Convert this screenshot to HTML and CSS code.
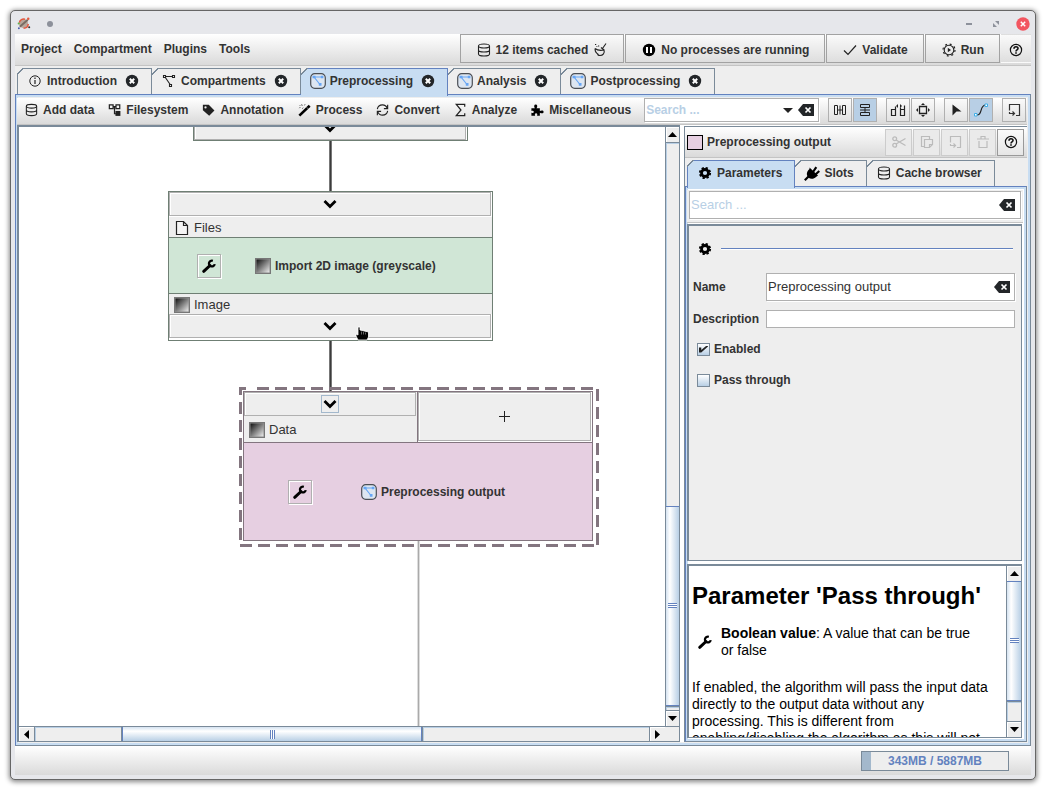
FILE: index.html
```html
<!DOCTYPE html>
<html lang="en">
<head>
<meta charset="utf-8">
<title>Preprocessing</title>
<link rel="stylesheet" href="styles.css">
</head>
<body>
<svg class="defs" aria-hidden="true">
  <defs>
    <linearGradient id="grey" x1="0" y1="0" x2="1" y2="1"><stop offset="0" stop-color="#111"/><stop offset="1" stop-color="#eee"/></linearGradient>
  </defs>
  <symbol id="db" viewBox="0 0 16 16"><g fill="none" stroke="#222" stroke-width="1.1"><ellipse cx="8" cy="4" rx="5.500" ry="2"/><path d="M2.500 4v8c0 1.200 2.500 2 5.500 2s5.500-.8 5.500-2V4M2.500 8c0 1.200 2.500 2 5.500 2s5.500-.8 5.500-2"/></g></symbol>
  <symbol id="close" viewBox="0 0 16 16"><circle cx="8" cy="8" r="6.2" fill="#232629"/><path d="M5.800 5.800l4.400 4.400M10.200 5.800l-4.400 4.400" stroke="#fff" stroke-width="2"/></symbol>
  <symbol id="info" viewBox="0 0 16 16"><circle cx="8" cy="8" r="5.200" fill="none" stroke="#222"/><path d="M8 7v4M8 4.600v1.400" stroke="#222" stroke-width="1.200"/></symbol>
  <symbol id="graph" viewBox="0 0 16 16"><g fill="#fff" stroke="#222" stroke-width="1.100"><path d="M4 3.500h8M4 4l5.500 8"/><path d="M2.500 2.500h2v2h-2zM11.500 2.500h2v2h-2zM8.500 11.500h2v2h-2z"/></g></symbol>
  <symbol id="comp" viewBox="0 0 16 16"><rect x=".7" y=".7" width="14.600" height="14.600" rx="4" fill="#dde6f1" stroke="#4b4f55" stroke-width="1.200"/><path d="M4 4h8M4 4l6 7.500" stroke="#67a6f5" fill="none" stroke-width="1.200"/><path d="M2.500 2.700h3v2.600h-3zM10.800 2.700h2.600v2.600h-2.600zM8.800 10h2.700v2.800H8.800z" fill="#67a6f5"/></symbol>
  <symbol id="tree" viewBox="0 0 16 16"><g fill="none" stroke="#222" stroke-width="1.300"><path d="M2.500 2.500h4v4h-4zM9.600 2.500h4v4h-4zM6.500 4.500h3M8 4.500v7.500h2"/></g><path d="M9 9h5.300v5.300H9z" fill="#222"/></symbol>
  <symbol id="tag" viewBox="0 0 16 16"><path d="M2 2.500h6.300l6 6-5.600 5.700-6.700-6z" fill="#222"/><circle cx="4.800" cy="5.200" r="1.200" fill="#eee"/></symbol>
  <symbol id="wand" viewBox="0 0 16 16"><path d="M2.500 14L13.500 3.500" stroke="#000" stroke-width="2.800"/><path d="M10.500 5.300l1.300 1.300" stroke="#eee" stroke-width=".8"/><path d="M2.500 6l1-1M5 2l.5 1.500M8.500 2L8 3M3 3l.7.7M6.500 5.500l-.7 1" stroke="#333"/></symbol>
  <symbol id="sync" viewBox="0 0 16 16"><g fill="none" stroke="#222" stroke-width="1.200"><path d="M2.500 7C3 4 5 2.500 8 2.500c2.400 0 4.200 1.400 5 3.500M13.500 2.500V6.500H9.500M13.500 9C13 12 11 13.500 8 13.500c-2.400 0-4.200-1.400-5-3.500M2.500 13.500V9.500h4"/></g></symbol>
  <symbol id="sigma" viewBox="0 0 16 16"><path d="M12.500 4.500v-2.500h-9L8.500 8l-5 6h9v-2.500" fill="none" stroke="#222" stroke-width="1.300"/></symbol>
  <symbol id="puzzle" viewBox="0 0 16 16"><path d="M1.500 6h3.700c-1.300-1.700-.9-4 .9-4s2.200 2.300.9 4H10.500v3c1.700-.9 4-.9 4 1s-2.300 1.500-4 .8V14H7.500c.6-1.500.3-2.500-1-2.500s-1.600 1-1 2.500h-4v-3c1.500.3 2.500 0 2.500-1s-1-1.300-2.500-1z" fill="#000"/></symbol>
  <symbol id="broom" viewBox="0 0 16 16"><g fill="none" stroke="#222" stroke-width="1.100"><path d="M14 1.500L10.500 6.500M3 6.500c2.500 2 6.500 2 9 1.500 1 3-1 5.500-4 5.500-2 0-2.500-1-2.500-2M3 6.500c0 3 1.500 5 3.500 6M9 5.500l3 2.500M3 2.500h1.200M6 4h1.200M4.500 4.500h.8"/></g></symbol>
  <symbol id="pause" viewBox="0 0 16 16"><circle cx="8" cy="8" r="6.200" fill="#000"/><path d="M5 5h2v6H5zM9 5h2v6H9z" fill="#fff"/></symbol>
  <symbol id="check" viewBox="0 0 16 16"><path d="M2 8.500L6 12.500 14 3.500" fill="none" stroke="#222" stroke-width="1.200"/></symbol>
  <symbol id="run" viewBox="0 0 16 16"><circle cx="8" cy="8" r="4.800" fill="none" stroke="#222" stroke-width="1.100"/><circle cx="8" cy="8" r="6" fill="none" stroke="#222" stroke-width="1.200" stroke-dasharray="2 2.712"/><path d="M6.800 5.800v4.400L10 8z" fill="#222"/></symbol>
  <symbol id="help" viewBox="0 0 16 16"><circle cx="8" cy="8" r="5.600" fill="none" stroke="#111" stroke-width="1.200"/><path d="M6 6.700c0-2.500 4-2.500 4-.2 0 1.500-2 1.400-2 3M8 10.300v1.500" fill="none" stroke="#111" stroke-width="1.600"/></symbol>
  <symbol id="clear" viewBox="0 0 16 12"><path d="M5 0h11v12H5L0 6z" fill="#232629"/><path d="M7.500 3.500l5 5M12.500 3.500l-5 5" stroke="#fff" stroke-width="1.700"/></symbol>
  <symbol id="gear" viewBox="0 0 16 16"><circle cx="8" cy="8" r="3.500" fill="none" stroke="#000" stroke-width="2.800"/><circle cx="8" cy="8" r="5.200" fill="none" stroke="#000" stroke-width="1.800" stroke-dasharray="2.300 1.784"/></symbol>
  <symbol id="plug" viewBox="0 0 16 16"><path d="M.8 15.200L4.500 11.500" stroke="#000" stroke-width="2.200"/><path d="M9 7L12.300 2.200M11.500 9.500L15.300 6" stroke="#000" stroke-width="2.200"/><path d="M5.500 2.500l8.500 8-2 1.500c-2 2-5 2.500-7.500.7C2 10 2.500 6.500 5.500 4z" fill="#000"/></symbol>
  <symbol id="wrench" viewBox="0 0 16 16"><path d="M2.700 13.300L9 7.500" stroke="#000" stroke-width="3" stroke-linecap="round"/><path d="M11.800 2.800a2.900 2.900 0 1 0 1.900 3.300" fill="none" stroke="#000" stroke-width="2.300"/></symbol>
  <symbol id="chev" viewBox="0 0 14 10"><path d="M1.500 2L7 7.500 12.500 2" fill="none" stroke="#000" stroke-width="2.800"/></symbol>
  <symbol id="image" viewBox="0 0 16 16"><rect x=".5" y=".5" width="15" height="15" fill="#8b8b8b" stroke="#777"/><rect x="1.500" y="1.500" width="13" height="13" fill="url(#grey)"/></symbol>
  <symbol id="file" viewBox="0 0 16 16"><path d="M2.500 1.500h7l4 4v9h-11zM9.500 1.500v4h4" fill="#f4f4f4" stroke="#222" stroke-width="1.200"/></symbol>
  <symbol id="export" viewBox="0 0 16 16"><path d="M10 13.500h3.500v-11h-10v6M3.500 10v1.500h5M6.500 9.500l2 2-2 2" fill="none" stroke="currentColor" stroke-width="1.200"/></symbol>
</svg>

<div class="window">
  <header class="titlebar">
    <svg class="logo" viewBox="0 0 16 16"><circle cx="7" cy="8" r="4.800" fill="#b8a79c"/><path d="M3 11.500L11.500 4" stroke="#786b62" stroke-width="2"/><path d="M2.500 7a4.600 4.600 0 0 1 6-3.500M12 8.500a5 5 0 0 1-5 4.500" fill="none" stroke="#e4573d" stroke-width="1.600"/><circle cx="12" cy="3" r="1.300" fill="#e4573d"/><circle cx="1.800" cy="8" r="1.100" fill="#5fb04c"/><circle cx="2" cy="13" r="1" fill="#4657a8"/><circle cx="13" cy="12" r="1.100" fill="#333"/></svg>
    <span class="pin"></span>
    <span class="grow"></span>
    <button class="wbtn" aria-label="Minimize"><svg viewBox="0 0 14 14"><path d="M4 7h6" stroke="#8d919b" stroke-width="2"/></svg></button>
    <button class="wbtn" aria-label="Maximize"><svg viewBox="0 0 14 14"><path d="M6 4h4v4zM4 6v4h4z" fill="#8d919b"/></svg></button>
    <button class="wbtn" aria-label="Close"><svg viewBox="0 0 14 14"><circle cx="7" cy="7" r="6.700" fill="#f25560"/><path d="M4.800 4.800l4.400 4.400M9.200 4.800L4.800 9.200" stroke="#fff" stroke-width="1.500"/></svg></button>
  </header>

  <nav class="menubar">
    <button class="menu">Project</button><button class="menu">Compartment</button><button class="menu">Plugins</button><button class="menu">Tools</button>
    <span class="grow"></span>
    <div class="actions">
      <button class="action"><svg><use href="#db"/></svg>12 items cached<svg><use href="#broom"/></svg></button>
      <button class="action"><svg><use href="#pause"/></svg>No processes are running</button>
      <button class="action"><svg><use href="#check"/></svg>Validate</button>
      <button class="action"><svg><use href="#run"/></svg>Run</button>
      <button class="action plain" aria-label="Help"><svg><use href="#help"/></svg></button>
    </div>
  </nav>

  <div class="tabs">
    <div class="tab"><button class="name"><svg><use href="#info"/></svg>Introduction</button><button class="x" aria-label="Close Introduction"><svg><use href="#close"/></svg></button></div>
    <div class="tab"><button class="name"><svg><use href="#graph"/></svg>Compartments</button><button class="x" aria-label="Close Compartments"><svg><use href="#close"/></svg></button></div>
    <div class="tab on"><button class="name"><svg><use href="#comp"/></svg>Preprocessing</button><button class="x" aria-label="Close Preprocessing"><svg><use href="#close"/></svg></button></div>
    <div class="tab"><button class="name"><svg><use href="#comp"/></svg>Analysis</button><button class="x" aria-label="Close Analysis"><svg><use href="#close"/></svg></button></div>
    <div class="tab"><button class="name"><svg><use href="#comp"/></svg>Postprocessing</button><button class="x" aria-label="Close Postprocessing"><svg><use href="#close"/></svg></button></div>
  </div>

  <main class="pane">
    <div class="toolbar">
      <div class="tools">
        <button class="tool"><svg><use href="#db"/></svg>Add data</button>
        <button class="tool"><svg><use href="#tree"/></svg>Filesystem</button>
        <button class="tool"><svg><use href="#tag"/></svg>Annotation</button>
        <button class="tool"><svg><use href="#wand"/></svg>Process</button>
        <button class="tool"><svg><use href="#sync"/></svg>Convert</button>
        <button class="tool"><svg><use href="#sigma"/></svg>Analyze</button>
        <button class="tool"><svg><use href="#puzzle"/></svg>Miscellaneous</button>
      </div>
      <div class="field find">
        <input type="text" placeholder="Search ..." aria-label="Search algorithms">
        <button class="bare" aria-label="Show list"><svg class="down" viewBox="0 0 10 5"><path d="M0 0h10L5 5z" fill="#222"/></svg></button>
        <button class="bare" aria-label="Clear search"><svg class="clear"><use href="#clear"/></svg></button>
      </div>
      <div class="group">
        <button class="sq" aria-label="Horizontal view"><svg viewBox="0 0 16 16"><path d="M2.500 3.500h3v9h-3zM10.500 3.500h3v9h-3zM5.500 8h5M8 3.500v9" fill="none" stroke="#222"/></svg></button>
        <button class="sq on" aria-label="Vertical view"><svg viewBox="0 0 16 16"><path d="M3.500 2.500h9v3h-9zM3.500 10.500h9v3h-9zM8 5.500v5M3 8h10" fill="none" stroke="#222"/></svg></button>
      </div>
      <div class="group">
        <button class="sq" aria-label="Auto layout"><svg viewBox="0 0 16 16"><path d="M1.500 7.500h4v6h-4zM5.500 7.500v-3M10.500 7.500h4v6h-4zM10.500 7.500v-2M14.500 7.500v-4" fill="none" stroke="#222" stroke-width="1.200"/><path d="M6 4l2-2v4zM12 4l-2-2v4z" fill="#222"/></svg></button>
        <button class="sq" aria-label="Center view"><svg viewBox="0 0 16 16"><path d="M4.500 4.500h7v7h-7z" fill="none" stroke="#222" stroke-width="1.300"/><path d="M6 3l2-2 2 2zM6 13l2 2 2-2zM3 6L1 8l2 2zM13 6l2 2-2 2z" fill="#222"/></svg></button>
      </div>
      <div class="group">
        <button class="sq" aria-label="Select"><svg viewBox="0 0 16 16"><path d="M4.500 2.500l9 7H8.500l-4 4z" fill="#222"/></svg></button>
        <button class="sq on" aria-label="Curved edges"><svg viewBox="0 0 16 16"><path d="M4 13c6 0 2-10 9-10" fill="none" stroke="#222" stroke-width="1.200"/><path d="M1.500 11.500h2.500V14H1.500zM12 2h2.500v2.500H12z" fill="#fff" stroke="#3daee9"/></svg></button>
      </div>
      <div class="group">
        <button class="sq" aria-label="Export"><svg><use href="#export"/></svg></button>
      </div>
    </div>

    <div class="split">
      <section class="editor">
        <div class="canvas">
          <svg class="edges" aria-hidden="true">
            <path d="M311.500 14v50M311.500 214v50" stroke="#777" stroke-width="3"/><path d="M311.500 14v50M311.500 214v50" stroke="#3c3c3c"/>
            <path d="M399.500 414v2000" stroke="#ddd" stroke-width="3"/><path d="M399.500 414v2000" stroke="#aaa"/>
          </svg>
          <div class="node first"><button class="slot" aria-label="Output slot"><svg class="chev"><use href="#chev"/></svg></button></div>
          <div class="node import">
            <button class="slot" aria-label="Input slot"><svg class="chev"><use href="#chev"/></svg></button>
            <div class="port"><svg><use href="#file"/></svg>Files</div>
            <div class="core"><button class="edit" aria-label="Edit import"><svg><use href="#wrench"/></svg></button><strong><svg><use href="#image"/></svg>Import 2D image (greyscale)</strong></div>
            <div class="port out"><svg><use href="#image"/></svg>Image</div>
            <button class="slot" aria-label="Image slot"><svg class="chev"><use href="#chev"/></svg></button>
          </div>
          <div class="node output">
            <div class="ports">
              <div class="cell">
                <button class="slot" aria-label="Data slot"><span class="focus"><svg class="chev"><use href="#chev"/></svg></span></button>
                <div class="port"><svg><use href="#image"/></svg>Data</div>
              </div>
              <button class="slot add" aria-label="Add slot"><svg viewBox="0 0 16 16"><path d="M7.500 2v11M2 7.500h11" stroke="#222" stroke-width="1"/></svg></button>
            </div>
            <div class="core"><button class="edit" aria-label="Edit output"><svg><use href="#wrench"/></svg></button><strong><svg><use href="#comp"/></svg>Preprocessing output</strong></div>
            <svg class="marquee" viewBox="0 0 361 162" aria-hidden="true"><g fill="none" stroke="#83757f" stroke-width="3"><path d="M1.500 9V2.500H7"/><path d="M18 2.500h338M358.500 3v157M1 159.500h356M1.500 16v139" stroke-dasharray="12 6"/></g></svg>
          </div>
          <svg class="pointer" viewBox="0 0 14 15" aria-hidden="true"><path d="M3 1v8L1 8v2l2 4h9l1.500-3V6L5 4V1z" fill="#000" stroke="#fff" stroke-width=".8"/><path d="M6.500 5.500v3M8.500 6v2.500M10.500 6.500v2" stroke="#888" stroke-width=".7"/></svg>
        </div>
        <div class="vbar main">
          <button aria-label="Scroll up"><svg viewBox="0 0 9 5"><path d="M0 5h9L4.500 0z"/></svg></button>
          <span class="before"></span><span class="thumb"></span><span class="after"></span>
          <button aria-label="Scroll down"><svg viewBox="0 0 9 5"><path d="M0 0h9L4.500 5z"/></svg></button>
        </div>
        <div class="hbar">
          <button aria-label="Scroll left"><svg viewBox="0 0 5 9"><path d="M5 0v9L0 4.500z"/></svg></button>
          <span class="before"></span><span class="thumb"></span><span class="after"></span>
          <button aria-label="Scroll right"><svg viewBox="0 0 5 9"><path d="M0 0v9l5-4.500z"/></svg></button>
        </div>
        <div class="corner"></div>
      </section>

      <aside class="side">
        <div class="sidehead">
          <span class="swatch"></span><h2>Preprocessing output</h2><span class="grow"></span>
          <button class="mini" disabled aria-label="Cut"><svg viewBox="0 0 16 16"><g fill="none" stroke="currentColor" stroke-width="1.300"><circle cx="3.700" cy="4.700" r="1.900"/><circle cx="3.700" cy="11.300" r="1.900"/><path d="M5 6l9.500 5.500M5 10l9.500-5.500"/></g></svg></button>
          <button class="mini" disabled aria-label="Copy"><svg viewBox="0 0 16 16"><path d="M5 12.500H2.500v-10h8V5M5.500 5.500h8v5l-3 3h-5zM13.500 10.500h-3v3" fill="none" stroke="currentColor" stroke-width="1.200"/></svg></button>
          <button class="mini" disabled aria-label="Paste"><svg><use href="#export"/></svg></button>
          <button class="mini" disabled aria-label="Delete"><svg viewBox="0 0 16 16"><path d="M2 5h12M6 5V2.500h4V5M4 7v6.500h8V7" fill="none" stroke="currentColor" stroke-width="1.200"/></svg></button>
          <button class="mini" aria-label="Help"><svg><use href="#help"/></svg></button>
        </div>
        <div class="tabs sidetabs">
          <div class="tab on"><button class="name"><svg><use href="#gear"/></svg>Parameters</button></div>
          <div class="tab"><button class="name"><svg><use href="#plug"/></svg>Slots</button></div>
          <div class="tab"><button class="name"><svg><use href="#db"/></svg>Cache browser</button></div>
        </div>
        <div class="sidepane">
          <div class="searchrow"><div class="field"><input type="text" placeholder="Search ..." aria-label="Search parameters"><button class="bare" aria-label="Clear"><svg class="clear"><use href="#clear"/></svg></button></div></div>
          <form class="params">
            <div class="section"><svg><use href="#gear"/></svg><span class="rule"></span></div>
            <div class="grid">
              <label for="name">Name</label>
              <div class="field"><input id="name" type="text" value="Preprocessing output"><button type="button" class="bare" aria-label="Clear name"><svg class="clear"><use href="#clear"/></svg></button></div>
              <label for="desc">Description</label>
              <input id="desc" class="desc" type="text">
            </div>
            <label class="tick"><input type="checkbox" checked>Enabled</label>
            <label class="tick"><input type="checkbox">Pass through</label>
          </form>
          <div class="help">
            <article>
              <h1>Parameter 'Pass through'</h1>
              <div class="kind"><svg><use href="#wrench"/></svg><p><b>Boolean value</b>: A value that can be true or false</p></div>
              <p>If enabled, the algorithm will pass the input data directly to the output data without any processing. This is different from enabling/disabling the algorithm as this will not</p>
            </article>
            <div class="vbar">
              <button aria-label="Scroll help up"><svg viewBox="0 0 9 5"><path d="M0 5h9L4.500 0z"/></svg></button>
              <span class="thumb"></span><span class="after"></span>
              <button aria-label="Scroll help down"><svg viewBox="0 0 9 5"><path d="M0 0h9L4.500 5z"/></svg></button>
            </div>
          </div>
        </div>
      </aside>
    </div>
  </main>

  <footer class="status"><div class="memory" role="progressbar" aria-valuenow="343" aria-valuemax="5887" aria-label="Memory">343MB / 5887MB</div></footer>
</div>
</body>
</html>
```
FILE: styles.css
```css
:root {
  --line: #7a8a99;
  --blue: #6382bf;
  --sel: #c8ddf2;
  --bg: #eee;
  --edge: #b0b0b0;
  --bar: linear-gradient(#fff, #dadada);
}
* { box-sizing: border-box; }
body { margin: 0; background: #fff; color: #333; font: bold 12px/16px "Liberation Sans", Arial, sans-serif; }
button, input { font: inherit; color: inherit; margin: 0; padding: 0; border: 0; background: none; border-radius: 0; outline: 0; }
svg { width: 16px; height: 16px; flex: none; display: block; }
h1, h2, p { margin: 0; }
.defs { width: 0; height: 0; position: absolute; }
.grow { flex: 1; }

.window { margin: 10px; height: calc(100vh - 20px); display: flex; flex-direction: column; padding: 0 4px 4px; background: #e6e7eb; border: 1px solid #666; border-radius: 5px; box-shadow: 0 1px 5px 1px #888; }

.titlebar { display: flex; align-items: center; height: 23px; flex: none; padding: 2px 1px 0 2px; gap: 13px; }
.logo { width: 15px; height: 15px; }
.pin { width: 6px; height: 6px; border-radius: 3px; background: #8d919b; margin-left: 2px; }
.wbtn svg { width: 14px; height: 14px; }

.menubar { display: flex; align-items: stretch; height: 32px; flex: none; padding-bottom: 2px; background: linear-gradient(#fff, #dadada); border-bottom: 1px solid #c4c4c4; }
.menu { padding: 0 6px; }
.actions { display: flex; gap: 1px; }
.action { display: flex; align-items: center; gap: 4px; padding: 2px 15px 0; border: 1px solid #a2a2a2; background: linear-gradient(#fafafa, #dedede); }
.plain { border-color: transparent; padding: 2px 6px 0; }

.tabs { display: flex; flex: none; background: var(--bg); padding: 2px 2px 0; height: 28px; }
.tab { position: relative; display: flex; align-items: center; gap: 7px; padding: 0 11px 2px 9px; border: 1px solid var(--line); border-bottom: 0; background: var(--bg); }
.tab + .tab { border-left: 0; }
.tab::before { content: ""; position: absolute; left: 0; top: -1px; width: 7px; height: 7px; background: linear-gradient(135deg, var(--bg) 0 42%, var(--line) 42% 53%, transparent 53%); }
.tab:first-child::before { left: -1px; }
.tab.on { background: var(--sel); border-color: var(--blue); margin-bottom: -2px; padding-bottom: 4px; z-index: 1; }
.name { display: flex; align-items: center; gap: 4px; }

.pane { flex: 1; min-height: 0; display: flex; flex-direction: column; border: 1px solid var(--blue); border-right-color: var(--line); border-bottom-color: var(--line); background: var(--bg); box-shadow: inset 0 0 0 2px var(--sel); padding: 3px 3px 3px 1px; }
.toolbar { display: flex; align-items: center; height: 27px; flex: none; background: var(--bar); border-bottom: 1px solid #c4c4c4; gap: 9px; padding: 0 1px 2px 0; }
.tools { display: flex; gap: 13px; padding-left: 7px; flex: none; }
.tool { display: flex; align-items: center; gap: 4px; }
.tool svg { width: 15px; }
.field { display: flex; align-items: center; gap: 5px; background: #fff; border: 1px solid var(--edge); box-shadow: 1px 1px #fff; padding: 0 7px 0 1px; }
.field input { flex: 1; min-width: 0; width: 0; font-weight: normal; }
::placeholder { color: #b8cfe5; opacity: 1; }
.find { flex: 1; height: 24px; padding-right: 4px; margin-left: 4px; }
.find input { font-weight: bold; }
.down { width: 10px; height: 5px; }
.clear { width: 16px; height: 12px; }
.group { display: flex; gap: 1px; flex: none; }
.sq { width: 24px; height: 24px; display: grid; place-items: center; border: 1px solid var(--edge); background: linear-gradient(#fafafa, #e2e2e2); }
.sq.on { background: #b8cfe5; }

.split { flex: 1; min-height: 0; display: flex; gap: 4px; background: #fff; }
.editor { flex: 1; min-width: 0; display: grid; grid-template: minmax(0, 1fr) 15px / minmax(0, 1fr) 15px; border: 1px solid var(--line); border-width: 2px 0 1px 2px; }
.canvas { position: relative; overflow: hidden; background: #fff; }
.edges { position: absolute; width: 100%; height: 100%; }
.node { position: absolute; display: flex; flex-direction: column; background: #fff; border: 1px solid #6f7f74; font-weight: normal; }
.first { left: 174px; top: -12px; width: 275px; height: 26px; padding-bottom: 1px; }
.import { left: 149px; top: 64px; width: 325px; padding-bottom: 1px; }
.output { left: 224px; top: 264px; width: 350px; height: 150px; border-color: #83757f; }
.slot { flex: none; height: 24px; display: grid; place-items: center; background: var(--bg); border: 1px solid var(--edge); margin: 0 1px 1px 0; box-shadow: inset 1px 1px #fff; }
.chev { width: 14px; height: 10px; }
.port { display: flex; align-items: center; gap: 4px; height: 20px; padding: 1px 0 0 5px; background: var(--bg); font-size: 13px; }
.core { display: flex; align-items: center; height: 57px; padding-left: 28px; background: #d0e6d6; border: 1px solid #6f7f74; border-width: 1px 0; }
.edit { width: 24px; height: 24px; display: grid; place-items: center; border: 1px solid var(--edge); box-shadow: inset 1px 1px #fff, 1px 1px #fff; }
.core strong { display: flex; align-items: center; gap: 4px; margin-left: 34px; }
.ports { display: flex; height: 50px; }
.cell { width: 174px; border-right: 1px solid #83757f; background: var(--bg); }
.cell .slot { width: 172px; }
.cell .port { height: 25px; }
.add { flex: 1; height: 49px; }
.focus { padding: 3px 1px; border: 1px solid #a3b8cc; }
.output .core { flex: 1; padding-left: 44px; background: #e6cfe1; border-color: #83757f; border-bottom: 0; }
.output strong { margin-left: 49px; }
.marquee { position: absolute; left: -5px; top: -6px; width: 361px; height: 162px; pointer-events: none; }
.pointer { position: absolute; left: 336px; top: 199px; width: 14px; height: 15px; }

.vbar { width: 15px; display: flex; flex-direction: column; background: var(--bg); border: 1px solid var(--line); border-width: 0 1px; }
.hbar { display: flex; background: var(--bg); border-top: 1px solid var(--line); }
.vbar button { height: 15px; flex: none; display: grid; place-items: center; box-shadow: inset 1px 1px #fff; }
.hbar button { width: 15px; flex: none; display: grid; place-items: center; box-shadow: inset 1px 1px #fff; }
.vbar button svg { width: 9px; height: 5px; }
.hbar button svg { width: 5px; height: 9px; }
.before, .after { border: 1px solid var(--line); border-width: 1px 0 0; box-shadow: inset 1px 1px #b8cfe5; }
.vbar .after { border-bottom-width: 1px; }
.hbar .before, .hbar .after { border-width: 0 1px; }
.thumb { display: grid; place-items: center; border: 1px solid var(--blue); background: linear-gradient(90deg, #d5e3f1, #fff 30%, #b8cfe5); }
.vbar .thumb { border-width: 1px 0; }
.hbar .thumb { border-width: 0 1px; background: linear-gradient(#d5e3f1, #fff 30%, #b8cfe5); }
.thumb::before { content: ""; width: 9px; height: 5px; background: repeating-linear-gradient(var(--blue) 0 1px, #fff 1px 2px); }
.hbar .thumb::before { width: 5px; height: 9px; background: repeating-linear-gradient(90deg, var(--blue) 0 1px, #fff 1px 2px); }
.main .before { flex: 366; }
.main .thumb { flex: 200; }
.main .after { flex: 3; }
.hbar .before { flex: 87; }
.hbar .thumb { flex: 300; }
.hbar .after { flex: 228; }
.corner { border: 1px solid var(--line); border-width: 1px 1px 0 0; background: var(--bg); }

.side { width: 33%; max-width: 343px; flex: 1 0 343px; display: flex; flex-direction: column; border-top: 1px solid var(--line); border-left: 1px solid var(--line); background: var(--bg); margin-top: 1px; }
.sidehead { display: flex; align-items: center; height: 31px; flex: none; padding: 0 3px 0 2px; background: var(--bar); border-bottom: 1px solid #c4c4c4; gap: 1px; }
.sidehead h2 { font: inherit; margin-left: 3px; }
.swatch { width: 16px; height: 15px; background: #e6cfe1; border: 1px solid #000; }
.mini { width: 27px; height: 27px; display: grid; place-items: center; border: 1px solid #999; background: linear-gradient(#fafafa, #e6e6e6); color: #222; }
.mini:disabled { color: #bbb; background: #eaeaea; border-color: #ccc; }
.sidetabs { padding: 2px 2px 0; }
.sidetabs .tab { padding-right: 12px; padding-left: 9px; }
.sidepane { flex: 1; min-height: 0; display: flex; flex-direction: column; border: 1px solid var(--blue); border-bottom-color: var(--line); border-right-color: var(--line); padding: 3px 3px 3px 1px; box-shadow: inset 0 0 0 2px var(--sel); gap: 3px; background: #fff; }
.searchrow { flex: none; padding: 1px 2px 3px; background: var(--bg); border-bottom: 1px solid #c4c4c4; margin-bottom: -2px; }
.searchrow .field { height: 28px; padding-right: 5px; }
.searchrow input, .grid input { font-size: 13px; }
.params, .help { border: 1px solid var(--line); border-width: 2px 1px 1px 2px; margin-right: 1px; min-height: 0; }
.params { flex: 320 1 0; background: var(--bg); padding: 15px 6px 0 4px; overflow: hidden; }
.section { display: flex; align-items: center; gap: 8px; padding: 0 2px 0 4px; }
.rule { flex: 1; border-top: 1px solid var(--blue); border-bottom: 1px solid #fff; }
.grid { display: grid; grid-template-columns: 65px 1fr; gap: 9px 8px; align-items: center; margin-top: 16px; }
.grid .field { height: 28px; padding-right: 4px; }
.desc { height: 18px; width: 100%; background: #fff; border: 1px solid var(--edge); }
.tick { display: flex; align-items: center; gap: 4px; margin: 13px 0 0 4px; }
.tick + .tick { margin-top: 15px; }
.tick input { appearance: none; width: 13px; height: 13px; border: 1px solid var(--line); background: linear-gradient(#fff, #b8cfe5); display: grid; place-items: center; }
.tick input:checked::before { content: ""; width: 9px; height: 7px; background: #222; clip-path: polygon(0 30%, 25% 30%, 25% 65%, 85% 0, 100% 0, 100% 15%, 25% 100%, 0 100%); }
.help { flex: 171 1 0; display: flex; background: #fff; }
.help article { flex: 1; min-width: 0; overflow: hidden; padding: 15px 10px 0 3px; color: #000; font: 14px/17px "Liberation Sans", Arial, sans-serif; }
.help h1 { font-size: 24px; line-height: 30px; white-space: nowrap; }
.kind { display: flex; align-items: center; gap: 8px; padding: 14px 16px 20px 5px; }
.help .vbar { border-right: 0; }
.help .thumb { flex: 121; }
.help .after { flex: 20; }

.status { height: 29px; flex: none; display: flex; justify-content: flex-end; align-items: center; padding-right: 22px; background: linear-gradient(#fff, #dadada); }
.memory { width: 148px; height: 20px; line-height: 18px; text-align: center; color: var(--blue); border: 1px solid var(--line); background: linear-gradient(90deg, #a3b8cc 9px, var(--bg) 9px); }
```
